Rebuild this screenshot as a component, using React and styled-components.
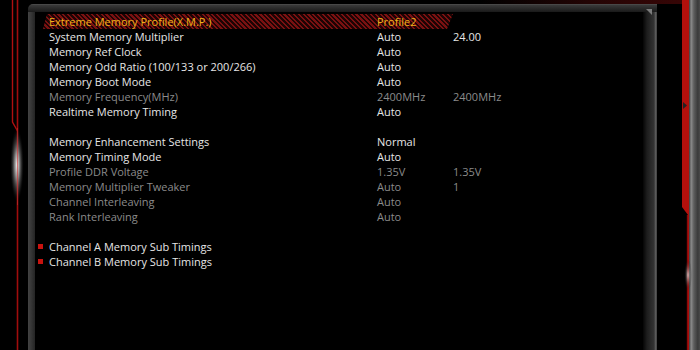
import React from "react";
import styled, { createGlobalStyle, css } from "styled-components";

const GlobalStyle = createGlobalStyle`
  html, body { margin: 0; padding: 0; background: #000; }
  body { overflow: hidden; font-family: "Open Sans", "Noto Sans", sans-serif; }
`;

const Screen = styled.div`
  display: flex;
  width: 700px;
  height: 350px;
  overflow: hidden;
  background:
    linear-gradient(90deg, transparent 0, transparent 480px, rgba(70, 8, 8, 0.55) 600px, rgba(90, 10, 10, 0.6) 680px) top / 100% 4px no-repeat,
    #000;
`;

const Rail = styled.div`
  flex: none;
  width: ${(p) => p.$w}px;
  height: 350px;
  svg { display: block; }
`;

const PanelFrame = styled.section`
  flex: none;
  width: 629px;
  margin-top: 4px;
  height: 346px;
  box-sizing: border-box;
  padding: 8px 14px 0 7px;
  position: relative;
  border-top-left-radius: 5px;
  background:
    linear-gradient(180deg, #565656 0, #3a3a3a 1px, #2c2c2c 4px, #1a1a1a 8px, transparent 8px),
    linear-gradient(90deg, #434343 0, #373737 3px, #242424 7px, #050505 9px, #050505 calc(100% - 14px), #1d1d1d calc(100% - 10px), #333 calc(100% - 3px), #666 calc(100% - 1px), #2a2a2a 100%);
  &::after {
    content: "";
    position: absolute;
    right: 5px;
    top: 5px;
    width: 0;
    height: 0;
    border-left: 6px solid transparent;
    border-top: 6px solid #7c7c7c;
  }
`;

const PanelBody = styled.div`
  height: 100%;
  background: #000;
  box-shadow: inset 2px 0 3px rgba(0, 0, 0, 0.9);
  padding-top: 2px;
  box-sizing: border-box;
`;

const COLORS = {
  normal: "#e6e6e6",
  disabled: "#8b8b8b",
  active: "#f0b21a",
};

const Row = styled.div`
  position: relative;
  display: grid;
  grid-template-columns: 14px 328px 76px 1fr;
  align-items: center;
  height: 15px;
  font-size: 11px;
  line-height: 15px;
  white-space: nowrap;
  color: ${(p) => COLORS[p.$kind || "normal"]};
  ${(p) =>
    p.$active &&
    css`
      &::before {
        content: "";
        position: absolute;
        left: 8px;
        top: 0;
        width: 410px;
        height: 15px;
        clip-path: polygon(4px 0, 100% 0, calc(100% - 6px) 100%, 0 100%);
        background: repeating-linear-gradient(
          45deg,
          #7a1111 0,
          #7a1111 1.6px,
          #1e0404 1.6px,
          #1e0404 3.4px
        );
      }
    `}
`;

const Cell = styled.span`
  position: relative;
`;

const Gutter = styled.span`
  display: flex;
  align-items: center;
`;

const Bullet = styled.i`
  display: block;
  width: 5px;
  height: 5px;
  margin-left: 3px;
  background: #c8130f;
`;

const Spacer = styled.div`
  height: 15px;
`;

const groups = [
  [
    { label: "Extreme Memory Profile(X.M.P.)", value: "Profile2", active: true, kind: "active" },
    { label: "System Memory Multiplier", value: "Auto", value2: "24.00" },
    { label: "Memory Ref Clock", value: "Auto" },
    { label: "Memory Odd Ratio (100/133 or 200/266)", value: "Auto" },
    { label: "Memory Boot Mode", value: "Auto" },
    { label: "Memory Frequency(MHz)", value: "2400MHz", value2: "2400MHz", kind: "disabled" },
    { label: "Realtime Memory Timing", value: "Auto" },
  ],
  [
    { label: "Memory Enhancement Settings", value: "Normal" },
    { label: "Memory Timing Mode", value: "Auto" },
    { label: "Profile DDR Voltage", value: "1.35V", value2: "1.35V", kind: "disabled" },
    { label: "Memory Multiplier Tweaker", value: "Auto", value2: "1", kind: "disabled" },
    { label: "Channel Interleaving", value: "Auto", kind: "disabled" },
    { label: "Rank Interleaving", value: "Auto", kind: "disabled" },
  ],
  [
    { label: "Channel A Memory Sub Timings", bullet: true },
    { label: "Channel B Memory Sub Timings", bullet: true },
  ],
];

function LeftDecor() {
  return (
    <svg width="28" height="350" viewBox="0 0 28 350">
      <defs>
        <radialGradient id="lglow" cx="0.5" cy="0.5" r="0.5">
          <stop offset="0" stopColor="#ffffff" stopOpacity="0.95" />
          <stop offset="0.35" stopColor="#bdbdbd" stopOpacity="0.7" />
          <stop offset="0.75" stopColor="#555" stopOpacity="0.3" />
          <stop offset="1" stopColor="#000" stopOpacity="0" />
        </radialGradient>
      </defs>
      <path d="M12.5 0 V122 L17.5 131" stroke="#b01010" strokeWidth="1.4" fill="none" />
      <path d="M17.5 0 V350" stroke="#a00d0d" strokeWidth="1.6" fill="none" />
      <ellipse cx="17" cy="165" rx="7" ry="38" fill="url(#lglow)" />
      <path d="M17.5 128 V205" stroke="#c03030" strokeWidth="1" opacity="0.6" />
    </svg>
  );
}

function RightDecor() {
  return (
    <svg width="43" height="350" viewBox="0 0 43 350">
      <defs>
        <linearGradient id="metal" x1="0" x2="1" y1="0" y2="0">
          <stop offset="0" stopColor="#3a3a3a" />
          <stop offset="0.2" stopColor="#8a8a8a" />
          <stop offset="0.45" stopColor="#5c5c5c" />
          <stop offset="0.8" stopColor="#3a3a3a" />
          <stop offset="1" stopColor="#4a4a4a" />
        </linearGradient>
        <radialGradient id="rglow" cx="0.5" cy="0.5" r="0.5">
          <stop offset="0" stopColor="#e8e8e8" stopOpacity="0.8" />
          <stop offset="1" stopColor="#000" stopOpacity="0" />
        </radialGradient>
      </defs>
      <rect x="32" y="0" width="11" height="350" fill="url(#metal)" />
      <path d="M25 0 H32 V350 H31 V215 L25 207 Z" fill="#b3100c" />
      <path d="M30.5 215 V350" stroke="#8a0a0a" strokeWidth="1.4" />
      <path d="M26 102 L30 105.5 L26 109 Z" fill="#222" />
      <ellipse cx="31" cy="275" rx="4" ry="16" fill="url(#rglow)" />
    </svg>
  );
}

export default function App() {
  return (
    <>
      <GlobalStyle />
      <Screen>
        <Rail $w={28}>
          <LeftDecor />
        </Rail>
        <PanelFrame>
          <PanelBody>
            {groups.map((items, gi) => (
              <React.Fragment key={gi}>
                {gi > 0 && <Spacer />}
                {items.map((it) => (
                  <Row key={it.label} $kind={it.kind} $active={it.active}>
                    <Gutter>{it.bullet && <Bullet />}</Gutter>
                    <Cell>{it.label}</Cell>
                    <Cell>{it.value}</Cell>
                    <Cell>{it.value2}</Cell>
                  </Row>
                ))}
              </React.Fragment>
            ))}
          </PanelBody>
        </PanelFrame>
        <Rail $w={43}>
          <RightDecor />
        </Rail>
      </Screen>
    </>
  );
}
